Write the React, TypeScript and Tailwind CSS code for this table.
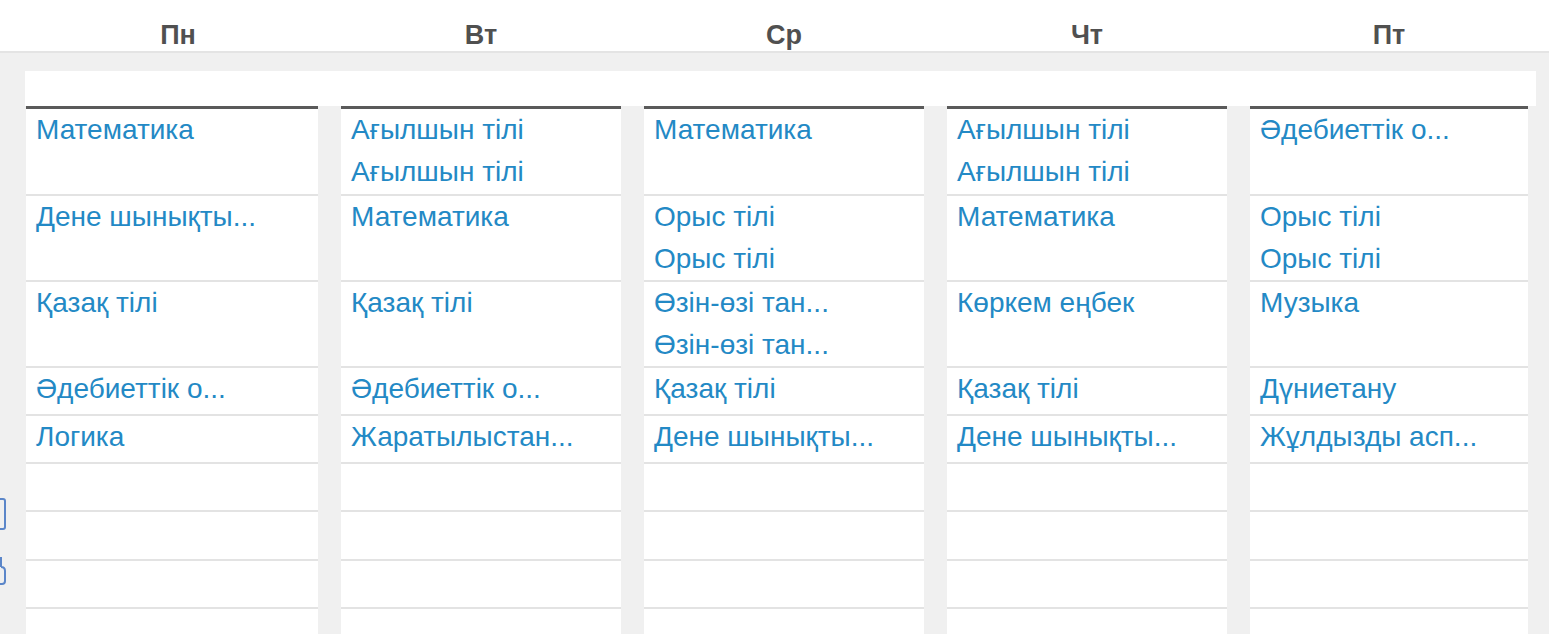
import React from 'react';

const days = ['Пн', 'Вт', 'Ср', 'Чт', 'Пт'];

// border-box heights, bottom divider included
const rowHeights = ['h-[87px]', 'h-[86px]', 'h-[86px]', 'h-[48px]', 'h-[48px]', 'h-[48px]', 'h-[49px]', 'h-[48px]', 'h-[48px]'];

const schedule: string[][][] = [
  [['Математика'], ['Дене шынықты...'], ['Қазақ тілі'], ['Әдебиеттік о...'], ['Логика']],
  [['Ағылшын тілі', 'Ағылшын тілі'], ['Математика'], ['Қазақ тілі'], ['Әдебиеттік о...'], ['Жаратылыстан...']],
  [['Математика'], ['Орыс тілі', 'Орыс тілі'], ['Өзін-өзі тан...', 'Өзін-өзі тан...'], ['Қазақ тілі'], ['Дене шынықты...']],
  [['Ағылшын тілі', 'Ағылшын тілі'], ['Математика'], ['Көркем еңбек'], ['Қазақ тілі'], ['Дене шынықты...']],
  [['Әдебиеттік о...'], ['Орыс тілі', 'Орыс тілі'], ['Музыка'], ['Дүниетану'], ['Жұлдызды асп...']],
];

const gridCols = 'grid grid-cols-[292px_280px_280px_280px_278px] gap-x-[23px]';

function DayColumn({ lessons }: { lessons: string[][] }) {
  return (
    <div className="bg-white border-t-[3px] border-[#5a5a5a] flex flex-col">
      {rowHeights.map((h, i) => (
        <div key={i} className={`${h} shrink-0 border-b-2 border-[#e3e3e3] pl-[10px] flex flex-col`}>
          {(lessons[i] || []).map((name, j) => (
            <div key={j} className="text-[28px] leading-[42px] text-[#2389c5] whitespace-nowrap">
              {name}
            </div>
          ))}
        </div>
      ))}
    </div>
  );
}

export default function App() {
  return (
    <div className="h-[634px] overflow-hidden bg-[#f0f0f0] relative" style={{ fontFamily: '"Liberation Sans", Arial, sans-serif' }}>
      <div className="bg-white h-[53px] border-b-2 border-[#e4e4e4] pl-[26px]">
        <div className={gridCols}>
          {days.map((d, i) => (
            <div key={d} className={`text-center font-bold text-[27px] leading-[34px] pt-[18px] text-[#505050] ${i === 0 ? 'pl-[12px]' : ''}`}>
              {d}
            </div>
          ))}
        </div>
      </div>
      <div className="pt-[18px]">
        <div className="ml-[25px] w-[1511px] h-[35px] bg-white" />
        <div className={`${gridCols} pl-[26px]`}>
          {schedule.map((lessons, i) => (
            <DayColumn key={i} lessons={lessons} />
          ))}
        </div>
      </div>
      <svg className="absolute left-0 top-[497px]" width="8" height="34" viewBox="0 0 8 34" fill="none">
        <path d="M0 2 H3 Q5 2 5 4 V30 Q5 32 3 32 H0" stroke="#5b86c9" strokeWidth="2" />
      </svg>
      <svg className="absolute left-0 top-[555px]" width="8" height="32" viewBox="0 0 8 32" fill="none">
        <path d="M1 2 V12 M1 12 Q5 12 5 16 V26 Q5 29 2 29 H0" stroke="#5b86c9" strokeWidth="2" />
      </svg>
    </div>
  );
}
